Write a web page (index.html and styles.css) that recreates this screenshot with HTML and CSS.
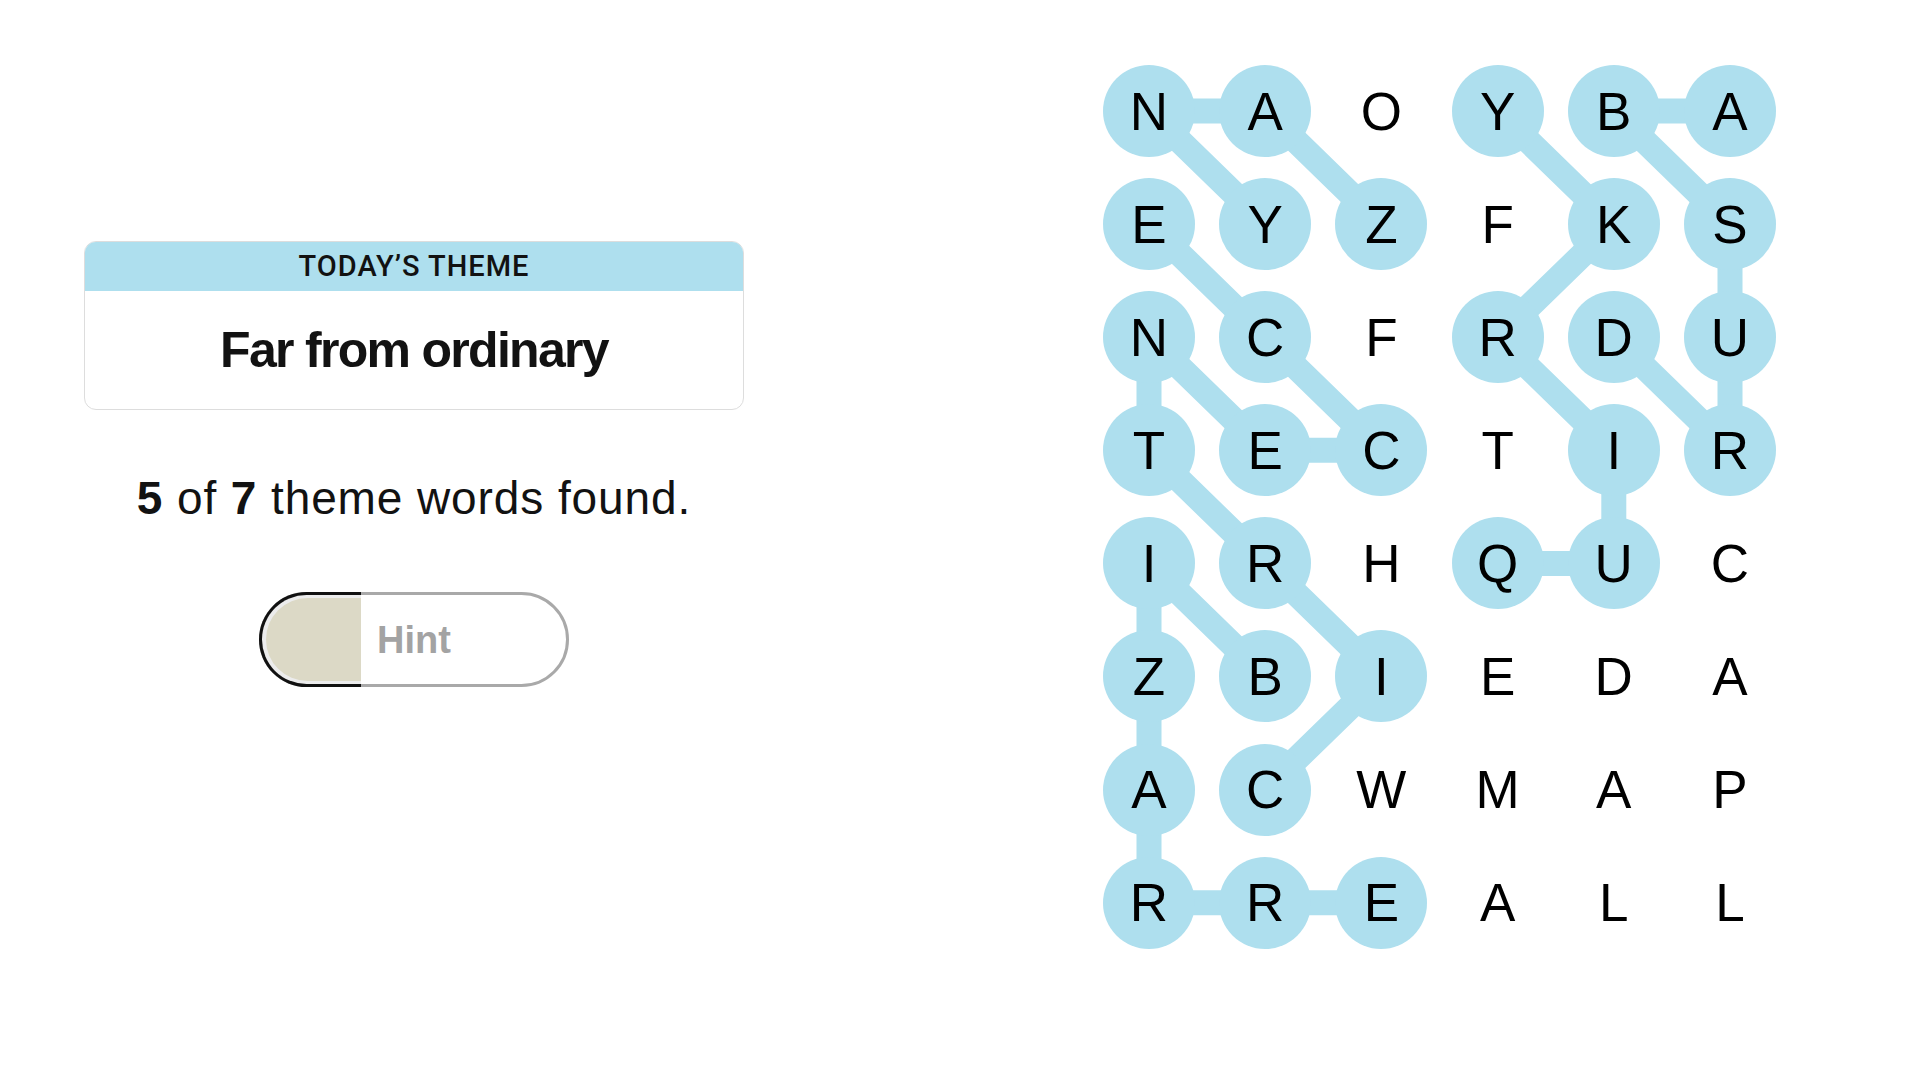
FILE: index.html
```html
<!DOCTYPE html>
<html lang="en">
<head>
<meta charset="utf-8">
<title>Strands</title>
<link rel="stylesheet" href="styles.css">
</head>
<body>
<div class="page">
  <section class="side">
    <div class="theme-card">
      <div class="theme-head">TODAY’S THEME</div>
      <div class="theme-title">Far from ordinary</div>
    </div>
    <p class="found"><b>5</b> of <b>7</b> theme words found.</p>
    <button class="hint">
      <span class="hint-fill"></span>
      <span class="hint-label">Hint</span>
    </button>
  </section>

  <section class="board">
    <svg class="links" width="673" height="884" viewBox="0 0 673 884">
      <g fill="none" stroke="#aedfee" stroke-width="25" stroke-linejoin="round">
        <polyline points="278.4,159.1 162.2,46 46,46 162.2,159.1"/>
        <polyline points="46,159.1 162.2,272.2 278.4,385.3 162.2,385.3 46,272.2 46,385.3 162.2,498.4 278.4,611.5 162.2,724.6"/>
        <polyline points="162.2,611.5 46,498.4 46,611.5 46,724.6 46,837.7 162.2,837.7 278.4,837.7"/>
        <polyline points="394.6,498.4 510.8,498.4 510.8,385.3 394.6,272.2 510.8,159.1 394.6,46"/>
        <polyline points="627,46 510.8,46 627,159.1 627,272.2 627,385.3 510.8,272.2"/>
      </g>
    </svg>

    <div class="cell on">N</div><div class="cell on">A</div><div class="cell">O</div><div class="cell on">Y</div><div class="cell on">B</div><div class="cell on">A</div>
    <div class="cell on">E</div><div class="cell on">Y</div><div class="cell on">Z</div><div class="cell">F</div><div class="cell on">K</div><div class="cell on">S</div>
    <div class="cell on">N</div><div class="cell on">C</div><div class="cell">F</div><div class="cell on">R</div><div class="cell on">D</div><div class="cell on">U</div>
    <div class="cell on">T</div><div class="cell on">E</div><div class="cell on">C</div><div class="cell">T</div><div class="cell on">I</div><div class="cell on">R</div>
    <div class="cell on">I</div><div class="cell on">R</div><div class="cell">H</div><div class="cell on">Q</div><div class="cell on">U</div><div class="cell">C</div>
    <div class="cell on">Z</div><div class="cell on">B</div><div class="cell on">I</div><div class="cell">E</div><div class="cell">D</div><div class="cell">A</div>
    <div class="cell on">A</div><div class="cell on">C</div><div class="cell">W</div><div class="cell">M</div><div class="cell">A</div><div class="cell">P</div>
    <div class="cell on">R</div><div class="cell on">R</div><div class="cell on">E</div><div class="cell">A</div><div class="cell">L</div><div class="cell">L</div>
  </section>
</div>
</body>
</html>
```

FILE: styles.css
```css
html, body {
  margin: 0;
  padding: 0;
  background: #ffffff;
}

body {
  font-family: "Liberation Sans", Arial, sans-serif;
  color: #000000;
}

.page {
  display: flex;
  align-items: flex-start;
  width: 1920px;
  height: 1080px;
}

/* ---------- left side ---------- */
.side {
  width: 660px;
  margin-left: 84px;
  padding-top: 241px;
  display: flex;
  flex-direction: column;
  align-items: center;
}

.theme-card {
  width: 100%;
  box-sizing: border-box;
  border: 1px solid #dddddd;
  border-radius: 12px;
  overflow: hidden;
  background: #ffffff;
}

.theme-head {
  height: 49px;
  line-height: 49px;
  background: #aedfee;
  text-align: center;
  font-family: Roboto, "Liberation Sans", sans-serif;
  font-weight: 500;
  font-size: 29px;
  letter-spacing: 1px;
  color: #121212;
}

.theme-title {
  height: 118px;
  line-height: 118px;
  text-align: center;
  font-weight: 700;
  font-size: 50px;
  letter-spacing: -1.7px;
  color: #121212;
}

.found {
  margin: 60px 0 0;
  font-size: 46px;
  line-height: 56px;
  letter-spacing: 0.9px;
  color: #121212;
  white-space: nowrap;
}

.found b {
  font-weight: 700;
}

.hint {
  position: relative;
  margin-top: 66px;
  width: 310px;
  height: 95px;
  box-sizing: border-box;
  padding: 0;
  border: 3px solid #a9a9a9;
  border-radius: 48px;
  background: #ffffff;
  display: flex;
  align-items: center;
  justify-content: center;
  font-family: "Liberation Sans", Arial, sans-serif;
  font-weight: 700;
  font-size: 38px;
  color: #a3a3a3;
}

.hint-fill {
  position: absolute;
  left: -3px;
  top: -3px;
  bottom: -3px;
  width: 102px;
  box-sizing: border-box;
  border: 3px solid #111111;
  border-right: 0;
  border-radius: 48px 0 0 48px;
  background: #ececec;
  padding: 3px 0 3px 4px;
}

.hint-fill::before {
  content: "";
  display: block;
  height: 100%;
  background: #dcd9c6;
  border-radius: 44px 0 0 44px;
}

.hint-label {
  position: relative;
  line-height: 1;
}

/* ---------- board ---------- */
.board {
  position: relative;
  margin-left: 359px;
  margin-top: 65px;
  display: grid;
  grid-template-columns: repeat(6, 92px);
  grid-template-rows: repeat(8, 92px);
  column-gap: 24.2px;
  row-gap: 21.1px;
}

.links {
  position: absolute;
  left: 0;
  top: 0;
}

.cell {
  position: relative;
  display: flex;
  align-items: center;
  justify-content: center;
  border-radius: 50%;
  font-size: 53px;
  line-height: 1;
  color: #000000;
}

.cell.on {
  background: #aedfee;
}
```
